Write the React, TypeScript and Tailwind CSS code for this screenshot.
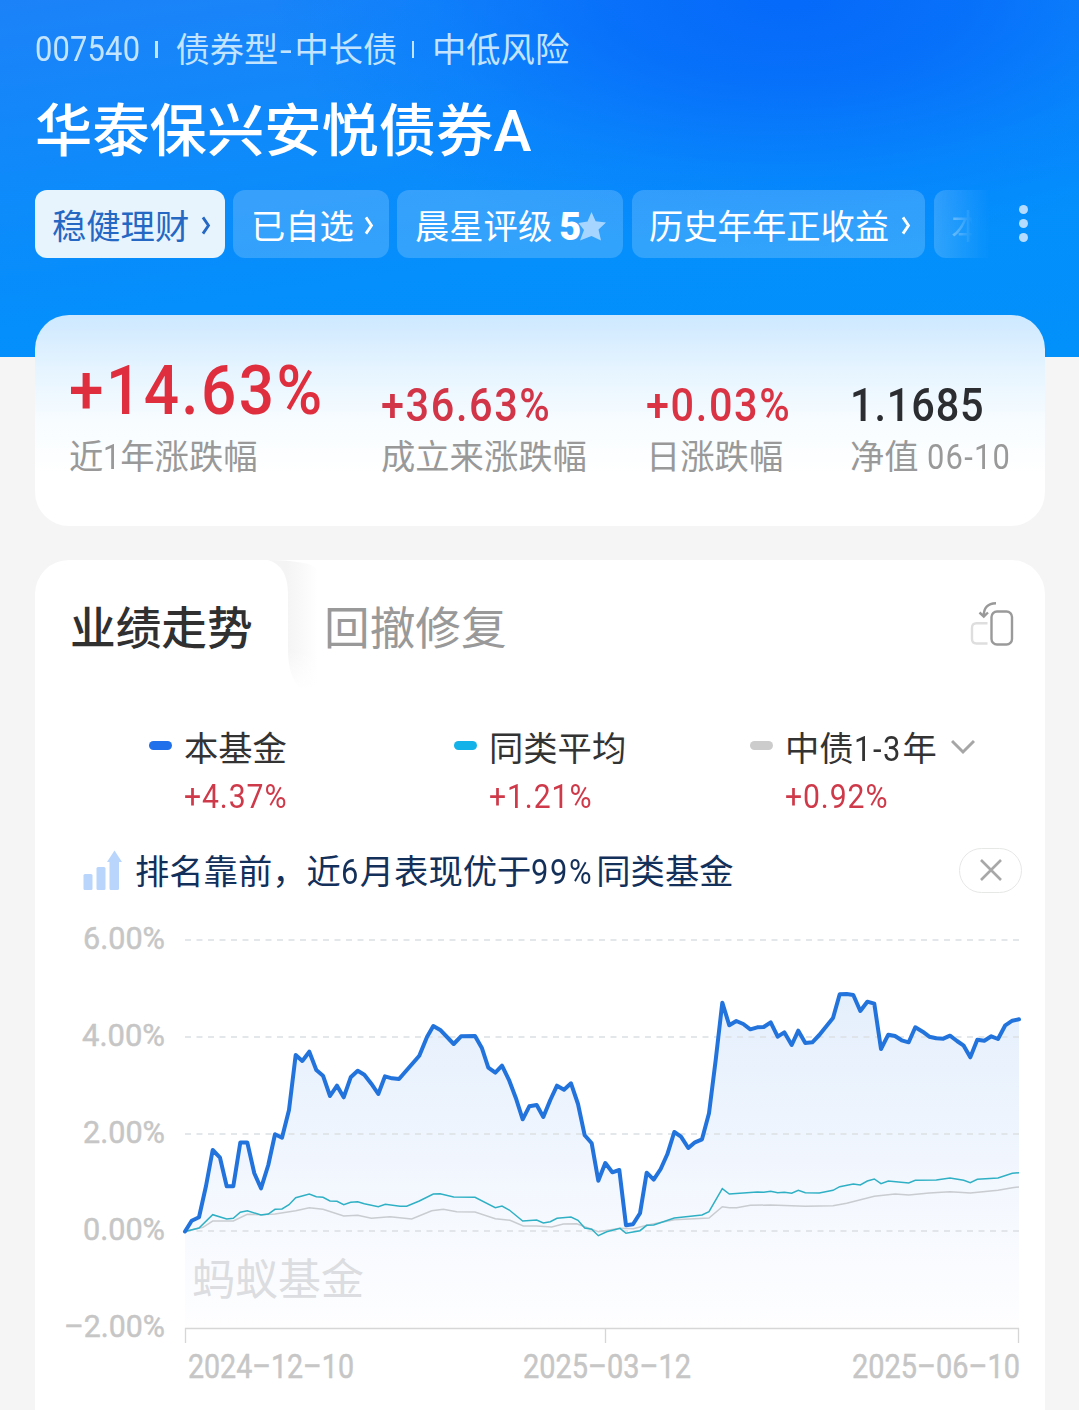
import React from 'react';
import { clsx } from 'clsx';

// --- Chart Data ---
const FUND_LINE =
    '185,1231.5 191.7,1220.7 199,1217.3 206,1186 212.7,1150 220,1157.7 226.7,1186.3 233.3,1186.3 240.3,1142.5 247.3,1142.5 254.3,1173.3 261,1188.3 268.3,1165 275,1134.3 282,1137.7 289,1110 295.7,1055 302.3,1061 309.3,1051.7 316.3,1070 323,1075.7 330,1096 337,1085.7 343.7,1097.3 350.7,1077.3 357.7,1070.7 364.3,1074.7 371.3,1083.7 378.3,1094 385,1076.3 392,1078.3 399,1079 419.3,1055.7 427,1037 433.3,1026 440.7,1030.3 453.7,1044 461,1036.3 475,1036 482,1048.3 488.3,1067.7 495.3,1072.7 502,1065.7 509.3,1080.7 516.3,1099.3 522.7,1119.3 529.3,1106.3 536.7,1105 543.3,1117 550.3,1100 557,1085.7 564,1089.7 571,1083.3 578,1104 584.7,1135.3 591.7,1143.3 598.3,1180.7 605.3,1163 612.3,1172.3 619.3,1170 626,1225.3 633,1224.3 640,1213.3 646.7,1172.7 653.7,1179.7 660.7,1169 667.3,1154.3 674.3,1132 681,1136.7 688.3,1148 695,1142.3 702,1139.3 709,1113.3 715.7,1060 722.3,1002.7 729.3,1025.3 736.3,1021 743.3,1024 750.3,1029.3 757.3,1027.3 763.7,1027 770.7,1022.3 777.7,1036.7 784.3,1032.3 791.7,1045 798.3,1030.7 805.3,1043 812.3,1042.3 819.3,1035 833,1018 839.7,994.3 846.7,994 853.3,995 860.3,1011 867.3,1001.7 874.3,1003.7 881,1049 888.3,1034.7 895,1036 901.7,1040.3 908.7,1042.3 915.3,1027.3 922.7,1031.7 929.3,1036.7 936.3,1038.3 943.3,1038.7 950,1035.7 957,1041 963.7,1045.7 970.3,1057.3 977.3,1039.7 984.3,1040.7 991.3,1036.3 998,1039 1005.3,1025.3 1012.3,1020.7 1019,1019.3';

const PEER_LINE =
    '185,1231.5 199,1228 212.7,1214.7 226.7,1219 233.3,1218.3 240.3,1212.3 247.3,1210.7 261,1215 268.3,1214 275,1209.3 282,1209 289,1204.7 295.7,1197.7 309.3,1194 316.3,1196.7 323,1197.3 330,1201 337,1201.3 343.7,1204.7 350.7,1202.3 357.7,1201.7 364.3,1203.7 378.3,1206.7 385.3,1204.3 400,1206.3 406.7,1206.3 419.3,1201 433.3,1194 440,1193.7 453.7,1197 475,1197.3 495.3,1207.7 502,1206 509.3,1210 522.7,1221 536.7,1220 543.3,1223 550.3,1221.7 557,1218.3 571,1217 578,1220.3 584.7,1228 591.7,1229.3 598.3,1235.7 606.7,1231.7 620,1228.3 626,1233.3 640,1230.7 646.7,1225.3 653.7,1225 674.3,1218 702,1215 709,1211.7 722.3,1188.7 729.3,1194 757.3,1192 763.7,1192.3 770.7,1191.3 777.7,1192.7 784.3,1192.3 791.7,1193.3 798.3,1190.3 805.3,1192.7 819.3,1193 833,1190.3 839.7,1186.7 853.3,1184 860.3,1185 867.3,1181 874.3,1179 881,1183.7 888.3,1181 908.7,1183 915.3,1180.3 936.3,1180 950,1178 963.7,1180.3 970.3,1182.7 977.3,1179.3 998,1178 1012.3,1173.3 1019,1172.7';

const INDEX_LINE =
    '185,1231.5 203,1227.3 212.7,1221 233.3,1221 247.3,1214.3 261,1214.7 275,1214 295.7,1210.7 309.3,1207.7 323,1209.3 343.7,1216 357.7,1215.3 371.3,1218.3 390,1216.7 411.7,1219 431.7,1210.7 443.3,1209.3 456.7,1211.7 475,1212 495.3,1218.7 510,1220.3 523.3,1226 536.7,1226 551.7,1227 563.3,1224 576.7,1223.7 591.7,1229.3 598.3,1231.7 620,1228.3 633.3,1228.7 646.7,1225.3 674.3,1219.7 709,1218 722.3,1206.7 729.3,1207.7 736.7,1207.7 750.3,1205.3 770.7,1205 805.3,1206.3 833,1205.7 846.7,1203.3 874.3,1196.3 895,1194 908.7,1195 929.3,1193 950,1191.7 970.3,1193 998,1190.3 1012.3,1187.7 1019,1187';

const Y_TICKS = [
    { label: '6.00%', y: 940, width: 82 },
    { label: '4.00%', y: 1037, width: 83 },
    { label: '2.00%', y: 1134, width: 82 },
    { label: '0.00%', y: 1231, width: 82 },
    { label: '–2.00%', y: 1328, width: 101 },
];

const X_TICKS = [
    { label: '2024–12–10', x: 188, width: 166 },
    { label: '2025–03–12', x: 523, width: 168 },
    { label: '2025–06–10', x: 852, width: 168 },
];

// --- Small Pieces ---

// Condensed figures; the width class keeps the inline box as wide as the squeezed text
const Num = ({ children, className }: { children: React.ReactNode; className: string }) => (
    <span className={clsx('inline-block whitespace-nowrap origin-left scale-x-90', className)}>{children}</span>
);

const Chevron = () => (
    <svg className="w-[10px] h-[19px] shrink-0 -mt-[5px]" viewBox="0 0 10 20" fill="none" stroke="currentColor" strokeWidth="3">
        <path d="M1.8 1.5 L7.6 10 L1.8 18.5" />
    </svg>
);

const Chip = ({ children, className }: { children: React.ReactNode; className: string }) => (
    <div className={clsx('h-[68px] pt-[8px] shrink-0 rounded-xl flex items-center whitespace-nowrap text-[34.3px]', className)}>{children}</div>
);

interface StatProps {
    value: string;
    label: React.ReactNode;
    className: string;
    valueClass: string;
}

const Stat = ({ value, label, className, valueClass }: StatProps) => (
    <div className={clsx('shrink-0 whitespace-nowrap', className)}>
        <div className="h-[80px] flex items-end">
            <span className={clsx('inline-block origin-left scale-x-90 font-medium', valueClass)}>{value}</span>
        </div>
        <div className="h-[44px] leading-[44px] text-[34.3px] text-[#999999]">{label}</div>
    </div>
);

interface LegendProps {
    label: React.ReactNode;
    value: string;
    className: string;
    dot: string;
    arrow?: boolean;
}

const Legend = ({ label, value, className, dot, arrow }: LegendProps) => (
    <div className={clsx('shrink-0 whitespace-nowrap', className)}>
        <div className="flex items-center h-[54px] pt-[4px]">
            <span className={clsx('w-[23px] h-[9px] rounded-full mr-[12px] -mt-[4px]', dot)} />
            <span className="pt-[4px] text-[34.3px] leading-[46px] text-[#333333]">{label}</span>
            {arrow && (
                <svg className="w-[24px] h-[16px] ml-[14px]" viewBox="0 0 24 16" fill="none" stroke="#a6a6a6" strokeWidth="3">
                    <path d="M1 2 L12 13 L23 2" />
                </svg>
            )}
        </div>
        <div className="ml-[35px] h-[50px] leading-[50px] text-[33.5px] origin-left scale-x-90 tracking-[1px] text-[#cf3a4a]">{value}</div>
    </div>
);

// --- Header ---
const Header = () => (
    <header className="h-[357px] text-white bg-[radial-gradient(ellipse_520px_250px_at_790px_0px,#0569f9_0%,rgba(5,107,250,0.8)_35%,rgba(5,120,252,0.4)_70%,rgba(4,144,255,0)_100%),linear-gradient(172deg,#1c82f8_0%,#0f8afb_35%,#048ffc_65%,#0290fb_100%)]">
        <div className="pt-6 pl-[35px] flex items-center h-[77px] text-[34.3px] text-[#c3e4ff] whitespace-nowrap">
            <Num className="w-[105px] tracking-[0.2px] -mt-[2px]">007540</Num>
            <span className="w-[2.5px] h-[17px] ml-[15px] mr-[18px] -mt-[2px] bg-[#c3e4ff]" />
            <span className="w-[222px]">债券型<span className="inline-block w-[16px] scale-x-125 text-center">-</span>中长债</span>
            <span className="w-[2.5px] h-[17px] ml-[14px] mr-[18px] -mt-[2px] bg-[#c3e4ff]" />
            <span>中低风险</span>
        </div>
        <h1 className="pl-[35px] h-[112px] leading-[110px] text-[57.3px] font-medium whitespace-nowrap">华泰保兴安悦债券A</h1>

        {/* Tag row */}
        <div className="flex items-center pl-[35px] mt-px">
            <div className="w-[965px] flex">
                <Chip className="w-[190px] pl-[17px] gap-[12px] bg-[#e8f4fd] text-[#2468c4]">稳健理财<Chevron /></Chip>
                <Chip className="w-[156px] ml-2 pl-[18px] gap-[10px] bg-white/18">已自选<Chevron /></Chip>
                <Chip className="w-[226px] ml-2 pl-[18px] bg-white/18">
                    晨星评级
                    <span className="ml-[7px] -mt-[1px] text-[38px] font-black">5</span>
                    <svg className="w-[28px] h-[30px] -ml-[3px] -mt-[4px]" viewBox="0 0 28 30" fill="#a6d6ff">
                        <path d="M13.5 1 L17.6 10.2 L28 11.5 L20.5 18.5 L23 29.5 L13.5 25 L2 29.5 L6 19 L0.5 12 L9.5 10.5 Z" />
                    </svg>
                </Chip>
                <Chip className="w-[293px] ml-[9px] pl-[17px] gap-[12px] bg-white/18">历史年年正收益<Chevron /></Chip>
                <Chip className="w-[66px] ml-[9px] pl-[17px] bg-linear-to-r from-white/18 to-white/0 to-85%">
                    <span className="bg-linear-to-r from-white/35 to-white/0 to-65% bg-clip-text text-transparent">本</span>
                </Chip>
            </div>
            <div className="flex flex-col gap-[5px] ml-[19px] -mt-[1px]">
                <span className="w-[9px] h-[9px] rounded-full bg-[#b5dcff]" />
                <span className="w-[9px] h-[9px] rounded-full bg-[#b5dcff]" />
                <span className="w-[9px] h-[9px] rounded-full bg-[#b5dcff]" />
            </div>
        </div>
    </header>
);

// --- Summary Card ---
const Summary = () => (
    <section className="relative -mt-[42px] mx-[35px] w-[1010px] h-[211px] rounded-[34px] pl-[34px] pt-[40px] flex bg-[linear-gradient(180deg,#cde8ff_0%,#e5f4ff_25%,#f7fcff_50%,#ffffff_75%)]">
        <Stat className="w-[312px]" value="+14.63%" valueClass="text-[69px] leading-[88px] tracking-[2.7px] text-[#df2f3e]" label={<>近<Num className="w-[17px]">1</Num>年涨跌幅</>} />
        <Stat className="w-[265px]" value="+36.63%" valueClass="text-[46px] leading-[60px] tracking-[1.8px] text-[#d13547]" label="成立来涨跌幅" />
        <Stat className="w-[204px]" value="+0.03%" valueClass="text-[46px] leading-[60px] tracking-[1.8px] text-[#d93344]" label="日涨跌幅" />
        <Stat className="" value="1.1685" valueClass="text-[46px] leading-[60px] tracking-[1px] text-[#2b2d30]" label={<>净值<Num className="ml-[8px] tracking-[1.4px]">06-10</Num></>} />
    </section>
);

// --- Trend Chart ---
const TrendChart = () => (
    <svg className="block w-[1010px] h-[510px]" viewBox="35 900 1010 510" fill="none" fontFamily="Roboto, 'Noto Sans CJK SC', sans-serif">
        <defs>
            <linearGradient id="fund-fill" gradientUnits="userSpaceOnUse" x1="0" y1="994" x2="0" y2="1328">
                <stop offset="0" stopColor="#e4effc" />
                <stop offset="0.5" stopColor="#f1f6fe" />
                <stop offset="1" stopColor="#fefeff" />
            </linearGradient>
        </defs>
        <polygon points={`185,1328 ${FUND_LINE} 1019,1328`} fill="url(#fund-fill)" />
        {Y_TICKS.map((tick) => (
            <g key={tick.label}>
                <text x={165 - tick.width} y={tick.y + 9} textLength={tick.width} lengthAdjust="spacingAndGlyphs" fontSize="32" fill="#c6c6c6" stroke="#c6c6c6" strokeWidth="0.5">{tick.label}</text>
                {tick.y < 1328 && <path d={`M185 ${tick.y}H1019`} stroke="#dcdfe3" strokeWidth="1.5" strokeDasharray="6 5.5" />}
            </g>
        ))}
        <path d="M185.5 1343V1328.5H1018.5V1343M605.5 1328.5V1343" stroke="#d6d6d6" strokeWidth="1.3" />
        <text x="192" y="1295" fontSize="43" fill="#dcdde0">蚂蚁基金</text>
        <polyline points={INDEX_LINE} stroke="#c9ccd0" strokeWidth="1.5" />
        <polyline points={PEER_LINE} stroke="#2fb0c4" strokeWidth="1.5" />
        <polyline points={FUND_LINE} stroke="#2273dc" strokeWidth="4" strokeLinejoin="round" strokeLinecap="round" />
        {X_TICKS.map((tick) => (
            <text key={tick.label} x={tick.x} y="1378" textLength={tick.width} lengthAdjust="spacingAndGlyphs" fontSize="33" fill="#c6c6c6" stroke="#c6c6c6" strokeWidth="0.5">{tick.label}</text>
        ))}
    </svg>
);

// --- Performance Panel ---
const Performance = () => (
    <section className="mt-[34px] mx-[35px] w-[1010px] h-[850px] rounded-t-[34px] bg-white">
        {/* Tabs */}
        <div className="flex h-[158px] whitespace-nowrap">
            <div className="w-[233px] h-[126px] pl-[35px] leading-[139px] text-[45.7px] font-medium text-[#303030]">业绩走势</div>
            <svg className="w-[56px] h-[130px]" viewBox="0 0 56 130" fill="none">
                <defs>
                    <linearGradient id="edge" gradientUnits="userSpaceOnUse" x1="18" x2="50" y1="0" y2="0">
                        <stop offset="0" stopColor="#f4f4f4" />
                        <stop offset="0.4" stopColor="#f8f8f8" />
                        <stop offset="1" stopColor="#ffffff" />
                    </linearGradient>
                    <linearGradient id="edge-fade" x1="0" x2="0" y1="0" y2="1">
                        <stop offset="0" stopColor="#fff" stopOpacity="0" />
                        <stop offset="0.7" stopColor="#fff" stopOpacity="0" />
                        <stop offset="1" stopColor="#fff" stopOpacity="1" />
                    </linearGradient>
                </defs>
                <path d="M0 0 Q20 6 20 34 V90 Q20 118 34 130 H56 V26 Q54 6 36 3 Q20 0 0 0 Z" fill="url(#edge)" />
                <rect width="56" height="130" fill="url(#edge-fade)" />
            </svg>
            <div className="w-[646px] leading-[139px] text-[45.7px] text-[#999999]">回撤修复</div>
            <svg className="w-[46px] h-[46px] mt-[41px]" viewBox="0 0 46 46" fill="none" strokeWidth="2.4">
                <rect x="21.5" y="10.5" width="20.5" height="33" rx="5.5" stroke="#9a9a9a" />
                <path d="M17.5 22.2 H6.5 Q2 22.2 2 27 V38 Q2 42.5 6.5 42.5 H17.5" stroke="#dedede" />
                <path d="M26 2.2 Q13.5 2.5 13.8 15 M9.5 11.5 L13.8 15.5 L18 11.5" stroke="#999999" />
            </svg>
        </div>

        {/* Legend */}
        <div className="flex pl-[114px] h-[126px]">
            <Legend className="w-[305px]" dot="bg-[#1f70ea]" label="本基金" value="+4.37%" />
            <Legend className="w-[296px]" dot="bg-[#13b2e8]" label="同类平均" value="+1.21%" />
            <Legend className="" dot="bg-[#cccccc]" label={<>中债<Num className="w-[49px] tracking-[1.8px]">1-3</Num>年</>} value="+0.92%" arrow />
        </div>

        {/* Ranking hint */}
        <div className="flex items-center h-[52px] pl-12 pr-[23px] whitespace-nowrap">
            <svg className="w-[40px] h-[40px]" viewBox="0 0 40 40" fill="#b9d5fb">
                <rect x="0.5" y="24" width="9" height="16" rx="1.5" />
                <rect x="13.5" y="17" width="9" height="23" rx="1.5" />
                <path d="M26.5 12 H24 L31.5 0.5 L39 12 H36 V38.5 Q36 40 34.5 40 H28 Q26.5 40 26.5 38.5 Z" />
            </svg>
            <span className="ml-[12px] pt-[5px] text-[34.3px] text-[#12305a]">排名靠前，近<Num className="w-[19px]">6</Num>月表现优于<Num className="w-[65px] tracking-[1.8px]">99%</Num>同类基金</span>
            <button className="ml-auto w-[63px] h-[45px] rounded-full border-[1.5px] border-[#e6e8e6] flex items-center justify-center">
                <svg className="w-[22px] h-[22px]" viewBox="0 0 22 22" stroke="#a8a8a8" strokeWidth="2.6">
                    <path d="M1 1 L21 21 M21 1 L1 21" />
                </svg>
            </button>
        </div>
        <div className="pt-1">
            <TrendChart />
        </div>
    </section>
);

const App = () => {
    return (
        <div className="w-[1079px] h-[1410px] overflow-hidden bg-[#f5f5f5] font-[Roboto,'Noto_Sans_CJK_SC',sans-serif]">
            <Header />
            <Summary />
            <Performance />
        </div>
    );
};

export default App;
